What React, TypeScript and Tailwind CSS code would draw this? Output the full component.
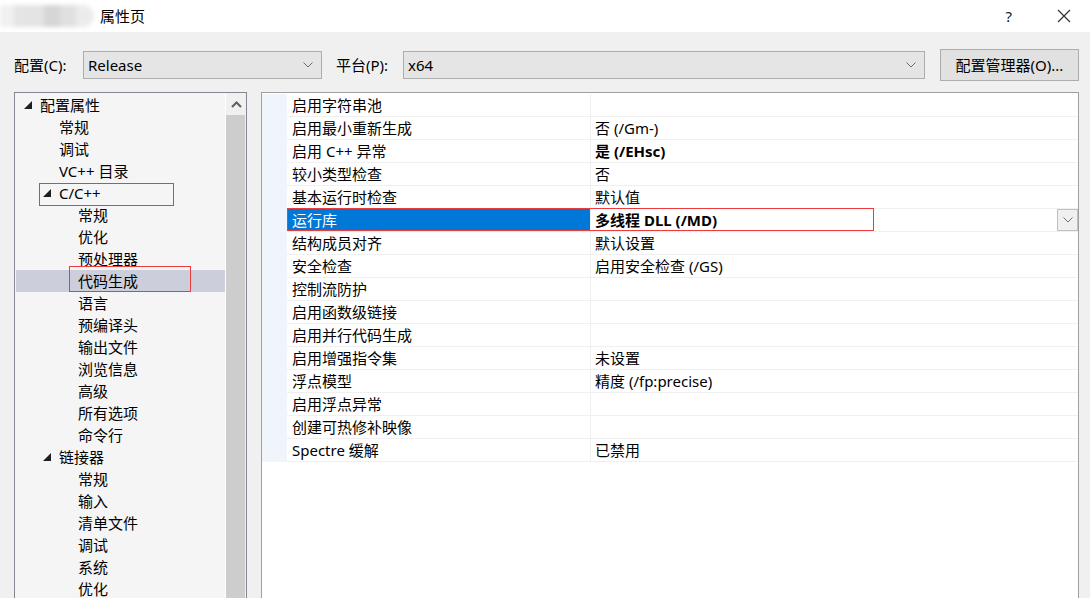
import React from 'react';

type TreeItem = { label: string; level: number; expanded?: boolean; selected?: boolean; mark?: string };

const tree: TreeItem[] = [
  { label: '配置属性', level: 0, expanded: true },
  { label: '常规', level: 1 },
  { label: '调试', level: 1 },
  { label: 'VC++ 目录', level: 1 },
  { label: 'C/C++', level: 1, expanded: true, mark: 'cpp' },
  { label: '常规', level: 2 },
  { label: '优化', level: 2 },
  { label: '预处理器', level: 2 },
  { label: '代码生成', level: 2, selected: true, mark: 'code' },
  { label: '语言', level: 2 },
  { label: '预编译头', level: 2 },
  { label: '输出文件', level: 2 },
  { label: '浏览信息', level: 2 },
  { label: '高级', level: 2 },
  { label: '所有选项', level: 2 },
  { label: '命令行', level: 2 },
  { label: '链接器', level: 1, expanded: true },
  { label: '常规', level: 2 },
  { label: '输入', level: 2 },
  { label: '清单文件', level: 2 },
  { label: '调试', level: 2 },
  { label: '系统', level: 2 },
  { label: '优化', level: 2 },
];

const props: { name: string; value: string; bold?: boolean; selected?: boolean }[] = [
  { name: '启用字符串池', value: '' },
  { name: '启用最小重新生成', value: '否 (/Gm-)' },
  { name: '启用 C++ 异常', value: '是 (/EHsc)', bold: true },
  { name: '较小类型检查', value: '否' },
  { name: '基本运行时检查', value: '默认值' },
  { name: '运行库', value: '多线程 DLL (/MD)', bold: true, selected: true },
  { name: '结构成员对齐', value: '默认设置' },
  { name: '安全检查', value: '启用安全检查 (/GS)' },
  { name: '控制流防护', value: '' },
  { name: '启用函数级链接', value: '' },
  { name: '启用并行代码生成', value: '' },
  { name: '启用增强指令集', value: '未设置' },
  { name: '浮点模型', value: '精度 (/fp:precise)' },
  { name: '启用浮点异常', value: '' },
  { name: '创建可热修补映像', value: '' },
  { name: 'Spectre 缓解', value: '已禁用' },
];

const levelPad = ['pl-[8px]', 'pl-[27px]', 'pl-[46px]'];

function Chevron() {
  return (
    <svg width="10" height="6" viewBox="0 0 10 6">
      <path d="M0.5 0.5 L5 5 L9.5 0.5" fill="none" stroke="#6d6d6d" strokeWidth="1" />
    </svg>
  );
}

function Triangle() {
  return (
    <svg width="8" height="8" viewBox="0 0 8 8">
      <polygon points="8,0 8,8 0,8" fill="#1e1e1e" />
    </svg>
  );
}

function Select({ value, width }: { value: string; width: string }) {
  return (
    <div className={`${width} h-[28px] flex items-center justify-between border border-[#adadad] bg-[#e5e5e5] pl-[4px] pr-[8px]`}>
      <span>{value}</span>
      <Chevron />
    </div>
  );
}

export default function App() {
  return (
    <div
      className="w-[1090px] h-[598px] overflow-hidden flex flex-col bg-[#f0f0f0] text-[15px] text-black"
      style={{ fontFamily: '"Noto Sans", "Noto Sans CJK SC", sans-serif' }}
    >
      {/* title bar */}
      <div className="h-[32px] bg-white flex items-center shrink-0">
        <div className="w-[96px] h-[26px] flex items-center blur-[2px]">
          <div className="w-[14px] h-[22px] bg-[#f0f0f0]" />
          <div className="w-[30px] h-[22px] bg-[#e4e4e4]" />
          <div className="w-[16px] h-[22px] bg-[#d6d6d6]" />
          <div className="w-[16px] h-[22px] bg-[#e0e0e0]" />
          <div className="w-[18px] h-[22px] bg-[#ececec] rounded-r-full" />
        </div>
        <span className="ml-[4px] leading-none">属性页</span>
        <span className="ml-auto mr-[45px] text-[15px] leading-none text-[#222]">?</span>
        <svg width="14" height="14" viewBox="0 0 14 14" className="mr-[19px]">
          <path d="M1 1 L13 13 M13 1 L1 13" stroke="#333" strokeWidth="1.2" />
        </svg>
      </div>

      {/* toolbar */}
      <div className="flex items-center h-[32px] mt-[17px] pl-[14px] shrink-0 leading-none">
        <span className="w-[69px]">配置(C):</span>
        <Select value="Release" width="w-[239px]" />
        <span className="ml-[14px] w-[67px]">平台(P):</span>
        <Select value="x64" width="w-[522px]" />
        <div className="ml-[15px] w-[139px] h-[32px] flex items-center justify-center border border-[#adadad] bg-[#e1e1e1]">
          配置管理器(O)...
        </div>
      </div>

      {/* panels */}
      <div className="flex flex-1 min-h-0 mt-[11px] pl-[14px]">
        {/* tree */}
        <div className="w-[233px] flex border border-[#828790] border-b-0 bg-[#f5f5f5]">
          <div className="flex-1 pt-[1px] pl-[1px]">
            {tree.map((t, i) => (
              <div
                key={i}
                className={`relative h-[22px] flex items-center leading-none ${levelPad[t.level]} ${t.selected ? 'bg-[#cccedb]' : ''}`}
              >
                <span className="w-[16px] flex items-center pb-[1px]">{t.expanded ? <Triangle /> : null}</span>
                <span>{t.label}</span>
                {t.mark === 'cpp' && (
                  <svg className="absolute z-10 left-[23px] top-[1px]" width="136" height="24" viewBox="0 0 136 24">
                    <rect x="0.5" y="0.5" width="134" height="22" fill="none" stroke="#ee3b3b" strokeWidth="1" />
                  </svg>
                )}
                {t.mark === 'code' && (
                  <svg className="absolute z-10 left-[53px] top-[-4px]" width="123" height="27" viewBox="0 0 123 27">
                    <rect x="0.5" y="0.5" width="121" height="25" fill="none" stroke="#ee3b3b" strokeWidth="1" />
                  </svg>
                )}
              </div>
            ))}
          </div>
          <div className="w-[21px] flex flex-col border-l border-white bg-[#f0f0f0]">
            <div className="h-[22px] flex items-center justify-center">
              <svg width="11" height="7" viewBox="0 0 11 7">
                <path d="M1 6 L5.5 1.5 L10 6" fill="none" stroke="#606060" strokeWidth="2" />
              </svg>
            </div>
            <div className="flex-1 bg-[#cdcdcd] mr-[1px]" />
          </div>
        </div>

        {/* property grid */}
        <div className="ml-[14px] w-[818px] border border-[#a0a0a0] border-b-0 bg-white pt-[1px] relative">
          {props.map((p, i) => (
            <div key={i} className="flex h-[23px] leading-none">
              <div className="w-[25px] bg-[#f0f4fb]" />
              <div className="flex flex-1 border-b border-[#f0f0f0]">
                <div
                  className={`w-[304px] flex items-center pl-[5px] border-r border-[#f0f0f0] ${p.selected ? 'bg-[#0078d7] text-white' : ''}`}
                >
                  {p.name}
                </div>
                <div className={`flex-1 flex items-center pl-[4px] ${p.bold ? 'font-bold' : ''}`}>
                  {p.value}
                  {p.selected && (
                    <div className="ml-auto w-[21px] h-[22px] flex items-center justify-center border border-[#c0c0c0] bg-[#f0f0f0]">
                      <Chevron />
                    </div>
                  )}
                </div>
              </div>
              {p.selected && (
                <div className="absolute left-[25px] w-[587px] h-[23px] border border-[#ee3b3b] -mt-[1px] pointer-events-none" />
              )}
            </div>
          ))}
        </div>
      </div>
    </div>
  );
}
